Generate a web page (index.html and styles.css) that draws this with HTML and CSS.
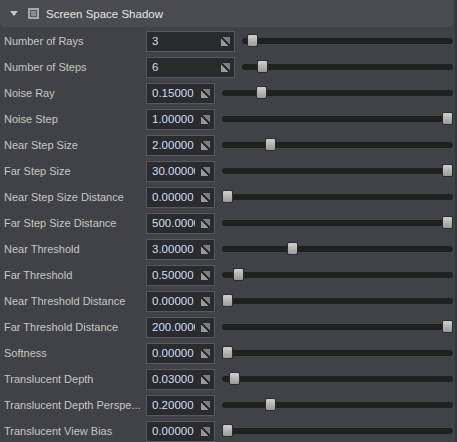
FILE: index.html
```html
<!DOCTYPE html>
<html lang="en">
<head>
    <meta charset="UTF-8">
    <title>Screen Space Shadow</title>
    <link rel="stylesheet" href="styles.css">
</head>
<body>

    <div class="panel">
        <div class="header">
            <span class="arrow"></span>
            <span class="check"></span>
            <span class="title">Screen Space Shadow</span>
        </div>

        <div class="rows">
            <div class="row wide">
                <span class="label">Number of Rays</span>
                <div class="field"><span class="value">3</span><span class="spin"></span></div>
                <div class="slider"><div class="track"></div><div class="thumb" style="left: calc((100% - 11px) * 0.025)"></div></div>
            </div>
            <div class="row wide">
                <span class="label">Number of Steps</span>
                <div class="field"><span class="value">6</span><span class="spin"></span></div>
                <div class="slider"><div class="track"></div><div class="thumb" style="left: calc((100% - 11px) * 0.075)"></div></div>
            </div>
            <div class="row">
                <span class="label">Noise Ray</span>
                <div class="field"><span class="value">0.15000</span><span class="spin"></span></div>
                <div class="slider"><div class="track"></div><div class="thumb" style="left: calc((100% - 11px) * 0.155)"></div></div>
            </div>
            <div class="row">
                <span class="label">Noise Step</span>
                <div class="field"><span class="value">1.00000</span><span class="spin"></span></div>
                <div class="slider"><div class="track"></div><div class="thumb" style="left: calc((100% - 11px) * 1)"></div></div>
            </div>
            <div class="row">
                <span class="label">Near Step Size</span>
                <div class="field"><span class="value">2.00000</span><span class="spin"></span></div>
                <div class="slider"><div class="track"></div><div class="thumb" style="left: calc((100% - 11px) * 0.195)"></div></div>
            </div>
            <div class="row">
                <span class="label">Far Step Size</span>
                <div class="field"><span class="value">30.00000</span><span class="spin"></span></div>
                <div class="slider"><div class="track"></div><div class="thumb" style="left: calc((100% - 11px) * 1)"></div></div>
            </div>
            <div class="row">
                <span class="label">Near Step Size Distance</span>
                <div class="field"><span class="value">0.00000</span><span class="spin"></span></div>
                <div class="slider"><div class="track"></div><div class="thumb" style="left: 0"></div></div>
            </div>
            <div class="row">
                <span class="label">Far Step Size Distance</span>
                <div class="field"><span class="value">500.00000</span><span class="spin"></span></div>
                <div class="slider"><div class="track"></div><div class="thumb" style="left: calc((100% - 11px) * 1)"></div></div>
            </div>
            <div class="row">
                <span class="label">Near Threshold</span>
                <div class="field"><span class="value">3.00000</span><span class="spin"></span></div>
                <div class="slider"><div class="track"></div><div class="thumb" style="left: calc((100% - 11px) * 0.295)"></div></div>
            </div>
            <div class="row">
                <span class="label">Far Threshold</span>
                <div class="field"><span class="value">0.50000</span><span class="spin"></span></div>
                <div class="slider"><div class="track"></div><div class="thumb" style="left: calc((100% - 11px) * 0.05)"></div></div>
            </div>
            <div class="row">
                <span class="label">Near Threshold Distance</span>
                <div class="field"><span class="value">0.00000</span><span class="spin"></span></div>
                <div class="slider"><div class="track"></div><div class="thumb" style="left: 0"></div></div>
            </div>
            <div class="row">
                <span class="label">Far Threshold Distance</span>
                <div class="field"><span class="value">200.00000</span><span class="spin"></span></div>
                <div class="slider"><div class="track"></div><div class="thumb" style="left: calc((100% - 11px) * 1)"></div></div>
            </div>
            <div class="row">
                <span class="label">Softness</span>
                <div class="field"><span class="value">0.00000</span><span class="spin"></span></div>
                <div class="slider"><div class="track"></div><div class="thumb" style="left: 0"></div></div>
            </div>
            <div class="row">
                <span class="label">Translucent Depth</span>
                <div class="field"><span class="value">0.03000</span><span class="spin"></span></div>
                <div class="slider"><div class="track"></div><div class="thumb" style="left: calc((100% - 11px) * 0.03)"></div></div>
            </div>
            <div class="row">
                <span class="label">Translucent Depth Perspe...</span>
                <div class="field"><span class="value">0.20000</span><span class="spin"></span></div>
                <div class="slider"><div class="track"></div><div class="thumb" style="left: calc((100% - 11px) * 0.195)"></div></div>
            </div>
            <div class="row">
                <span class="label">Translucent View Bias</span>
                <div class="field"><span class="value">0.00000</span><span class="spin"></span></div>
                <div class="slider"><div class="track"></div><div class="thumb" style="left: 0"></div></div>
            </div>
        </div>
    </div>

</body>
</html>
```

FILE: styles.css
```css
body {
    margin: 0;
    padding: 0;
    background-color: #414247;
    font-family: "Liberation Sans", Arial, sans-serif;
    font-size: 11px;
    color: #c6c6c6;
}
.panel {
    width: 457px;
    height: 442px;
    overflow: hidden;
    border-right: 2px solid #35363a;
    box-sizing: border-box;
}
.header {
    display: flex;
    align-items: center;
    height: 27px;
    margin-right: 2px;
    background-color: #4b4c52;
    border-radius: 0 0 5px 5px;
}
.arrow {
    width: 0;
    height: 0;
    margin-left: 10px;
    border-left: 4px solid transparent;
    border-right: 4px solid transparent;
    border-top: 5px solid #c4c4c4;
}
.check {
    width: 7px;
    height: 7px;
    margin-left: 10px;
    border: 2px solid #a8a8a8;
    background-color: #8a8a8a;
    box-shadow: inset 0 0 0 1px #5a5a5e;
}
.title {
    margin-left: 7px;
    font-size: 11.5px;
    color: #e6e6e6;
}
.rows {
    padding-top: 1px;
}
.row {
    display: flex;
    align-items: center;
    height: 26px;
    padding-left: 4px;
    padding-right: 2px;
}
.label {
    width: 142px;
    white-space: nowrap;
    overflow: hidden;
}
.field {
    position: relative;
    width: 69px;
    height: 21px;
    box-sizing: border-box;
    border: 1px solid #58595d;
    background-color: #2a2b2e;
    overflow: hidden;
}
.row.wide .field {
    width: 89px;
}
.value {
    position: absolute;
    left: 5px;
    top: 3px;
    font-size: 11.5px;
    color: #d2deee;
    white-space: nowrap;
}
.spin {
    position: absolute;
    right: 0;
    top: 0;
    width: 19px;
    height: 19px;
    background-color: #2a2b2e;
}
.spin::before {
    content: "";
    position: absolute;
    left: 6px;
    top: 5px;
    width: 9px;
    height: 9px;
    background: linear-gradient(45deg, #999999 44%, #2a2b2e 44%, #2a2b2e 56%, #7e7e7e 56%);
}
.slider {
    position: relative;
    flex: 1;
    height: 14px;
    margin-left: 7px;
}
.track {
    position: absolute;
    left: 0;
    right: 0;
    top: 4px;
    height: 6px;
    border-radius: 3px;
    background-color: #1f2021;
}
.thumb {
    position: absolute;
    top: 0;
    width: 11px;
    height: 13px;
    box-sizing: border-box;
    border: 1px solid #2c2c2e;
    border-radius: 2px;
    background: linear-gradient(#d0d0d0, #999999);
}
```
